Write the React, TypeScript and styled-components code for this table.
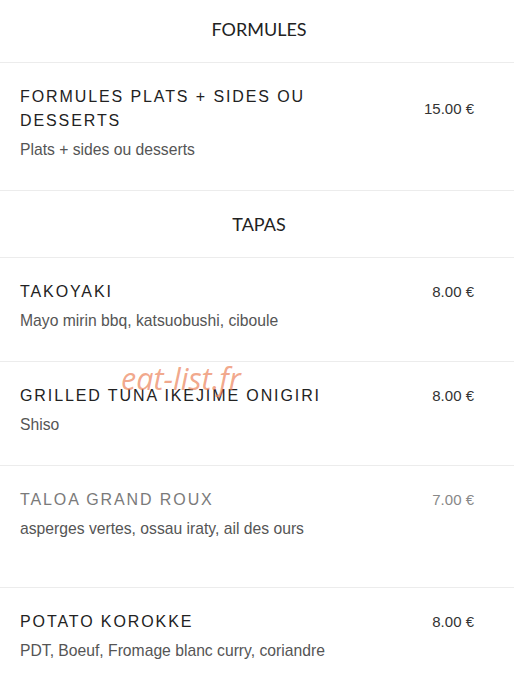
import React from "react";
import styled, { createGlobalStyle } from "styled-components";

const Global = createGlobalStyle`
  html, body { margin: 0; padding: 0; background: #fff; }
  body { overflow: hidden; }
`;

const Page = styled.div`
  position: relative;
  width: 514px;
  margin-top: -4px;
  font-family: "Liberation Sans", Arial, sans-serif;
`;

const SectionHeader = styled.div`
  height: 67px;
  display: flex;
  align-items: center;
  justify-content: center;
  padding-left: 4px;
  font-family: Lato, "Liberation Sans", sans-serif;
  font-size: 18px;
  color: #222;
  border-bottom: 1px solid #ececec;
  box-sizing: border-box;
`;

const Item = styled.div<{ $extra?: number }>`
  display: flex;
  flex-direction: column;
  padding: 22px 40px ${(p) => 28 + (p.$extra ?? 0)}px 20px;
  border-bottom: 1px solid #ececec;
`;

const TitleRow = styled.div`
  display: flex;
  align-items: center;
  justify-content: space-between;
  gap: 20px;
`;

const Title = styled.div<{ $muted?: boolean }>`
  font-family: "Liberation Sans", Arial, sans-serif;
  font-size: 16px;
  line-height: 24px;
  letter-spacing: 1.9px;
  text-transform: uppercase;
  color: ${(p) => (p.$muted ? "#7a7a7a" : "#222")};
  max-width: 340px;
`;

const Price = styled.div<{ $muted?: boolean }>`
  font-family: "Liberation Sans", Arial, sans-serif;
  font-size: 15px;
  line-height: 24px;
  color: ${(p) => (p.$muted ? "#888" : "#333")};
  white-space: nowrap;
  align-self: center;
`;

const Desc = styled.div`
  font-family: "Liberation Sans", Arial, sans-serif;
  margin-top: 5px;
  font-size: 15.7px;
  line-height: 24px;
  color: #555;
`;

const Watermark = styled.div`
  position: absolute;
  left: 121px;
  top: 364px;
  font-family: "Open Sans", "DejaVu Sans", sans-serif;
  font-style: italic;
  font-size: 30.5px;
  line-height: 36px;
  color: rgba(236, 130, 90, 0.7);
  pointer-events: none;
`;

type MenuItem = { name: string; desc: string; price: string; muted?: boolean; extra?: number };

const formules: MenuItem[] = [
  { name: "Formules plats + sides ou desserts", desc: "Plats + sides ou desserts", price: "15.00 €" },
];

const tapas: MenuItem[] = [
  { name: "Takoyaki", desc: "Mayo mirin bbq, katsuobushi, ciboule", price: "8.00 €" },
  { name: "Grilled tuna ikejime onigiri", desc: "Shiso", price: "8.00 €" },
  { name: "Taloa grand roux", desc: "asperges vertes, ossau iraty, ail des ours", price: "7.00 €", muted: true, extra: 18 },
  { name: "Potato korokke", desc: "PDT, Boeuf, Fromage blanc curry, coriandre", price: "8.00 €" },
];

const Row = ({ item }: { item: MenuItem }) => (
  <Item $extra={item.extra}>
    <TitleRow>
      <Title $muted={item.muted}>{item.name}</Title>
      <Price $muted={item.muted}>{item.price}</Price>
    </TitleRow>
    <Desc>{item.desc}</Desc>
  </Item>
);

export default function App() {
  return (
    <>
      <Global />
      <Page>
        <SectionHeader>FORMULES</SectionHeader>
        {formules.map((i) => (
          <Row key={i.name} item={i} />
        ))}
        <SectionHeader>TAPAS</SectionHeader>
        {tapas.map((i) => (
          <Row key={i.name} item={i} />
        ))}
        <Watermark>eat-list.fr</Watermark>
      </Page>
    </>
  );
}
